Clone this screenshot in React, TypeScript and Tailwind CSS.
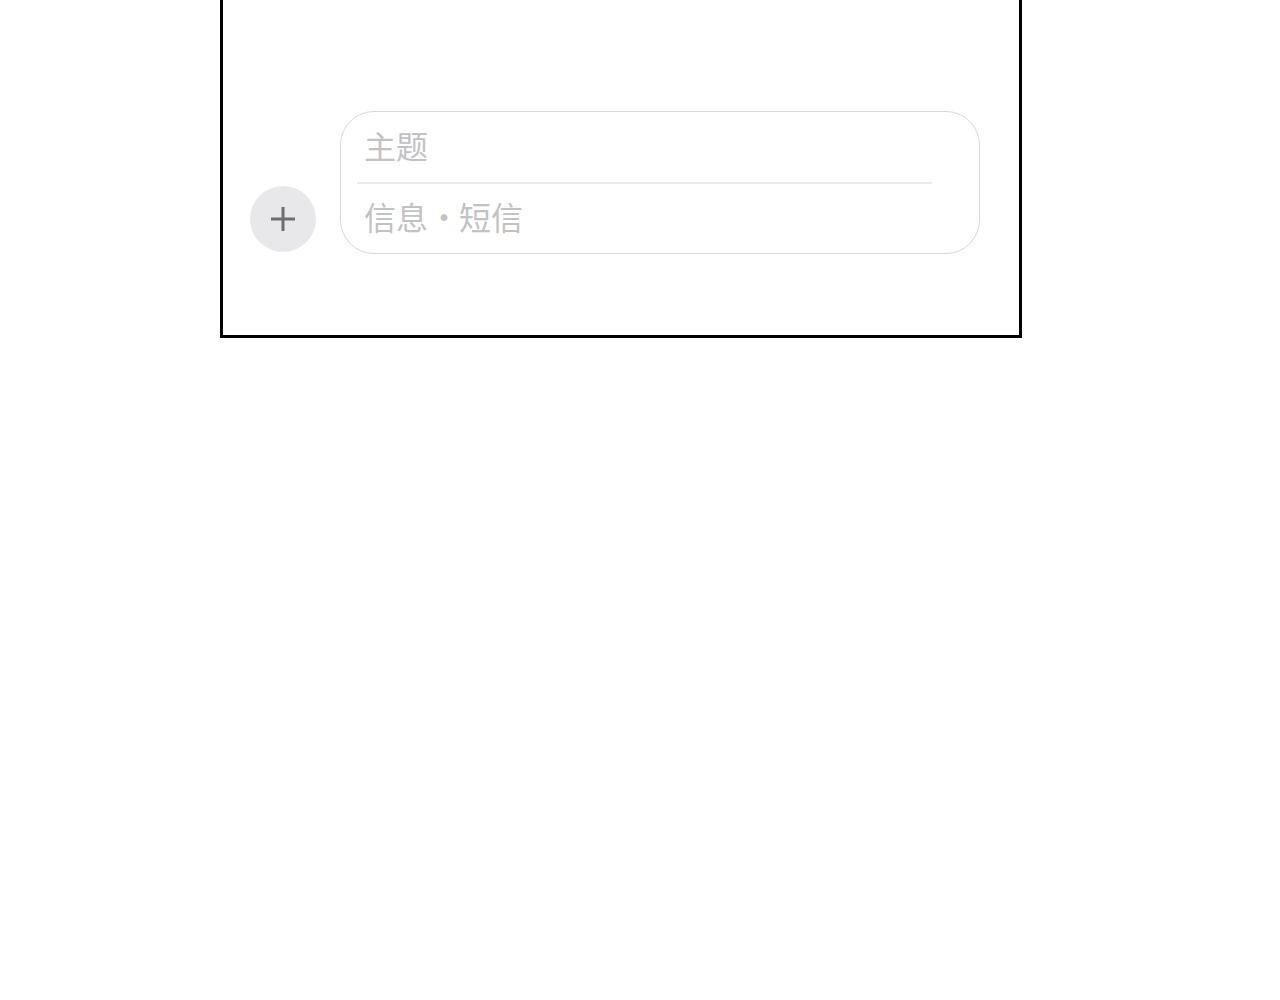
export default function App() {
  const font = { fontFamily: '"Noto Sans CJK SC", "Noto Sans", sans-serif' };
  return (
    <div className="w-[1280px] h-[1000px] bg-white" style={font}>
      <div className="ml-[220px] w-[802px] h-[338px] border-x-[3px] border-b-[3px] border-black bg-white pt-[111px] pl-[27px]">
        <div className="flex items-end gap-[24px]">
          <div className="w-[66px] h-[66px] mb-[2px] rounded-full bg-[#e8e8ea] flex items-center justify-center shrink-0">
            <svg width="28" height="28" viewBox="0 0 28 28">
              <path d="M14 2 V26 M2 14 H26" stroke="#6e6e70" strokeWidth="3" strokeLinecap="butt" />
            </svg>
          </div>
          <div className="w-[640px] h-[143px] rounded-[34px] border-[1.5px] border-[#d8d8d8] flex flex-col">
            <div className="h-[70px] flex items-center pl-[23px] pb-[4px] text-[32px] leading-none text-[#c2c2c4]">
              主题
            </div>
            <div className="ml-[16px] mr-[47px] h-[1.5px] bg-[#ebebeb]" />
            <div className="flex-1 flex items-center pl-[23px] pb-[4px] text-[32px] leading-none text-[#c2c2c4]">
              <span>信息</span>
              <span className="w-[31px] text-center">·</span>
              <span>短信</span>
            </div>
          </div>
        </div>
      </div>
    </div>
  );
}
